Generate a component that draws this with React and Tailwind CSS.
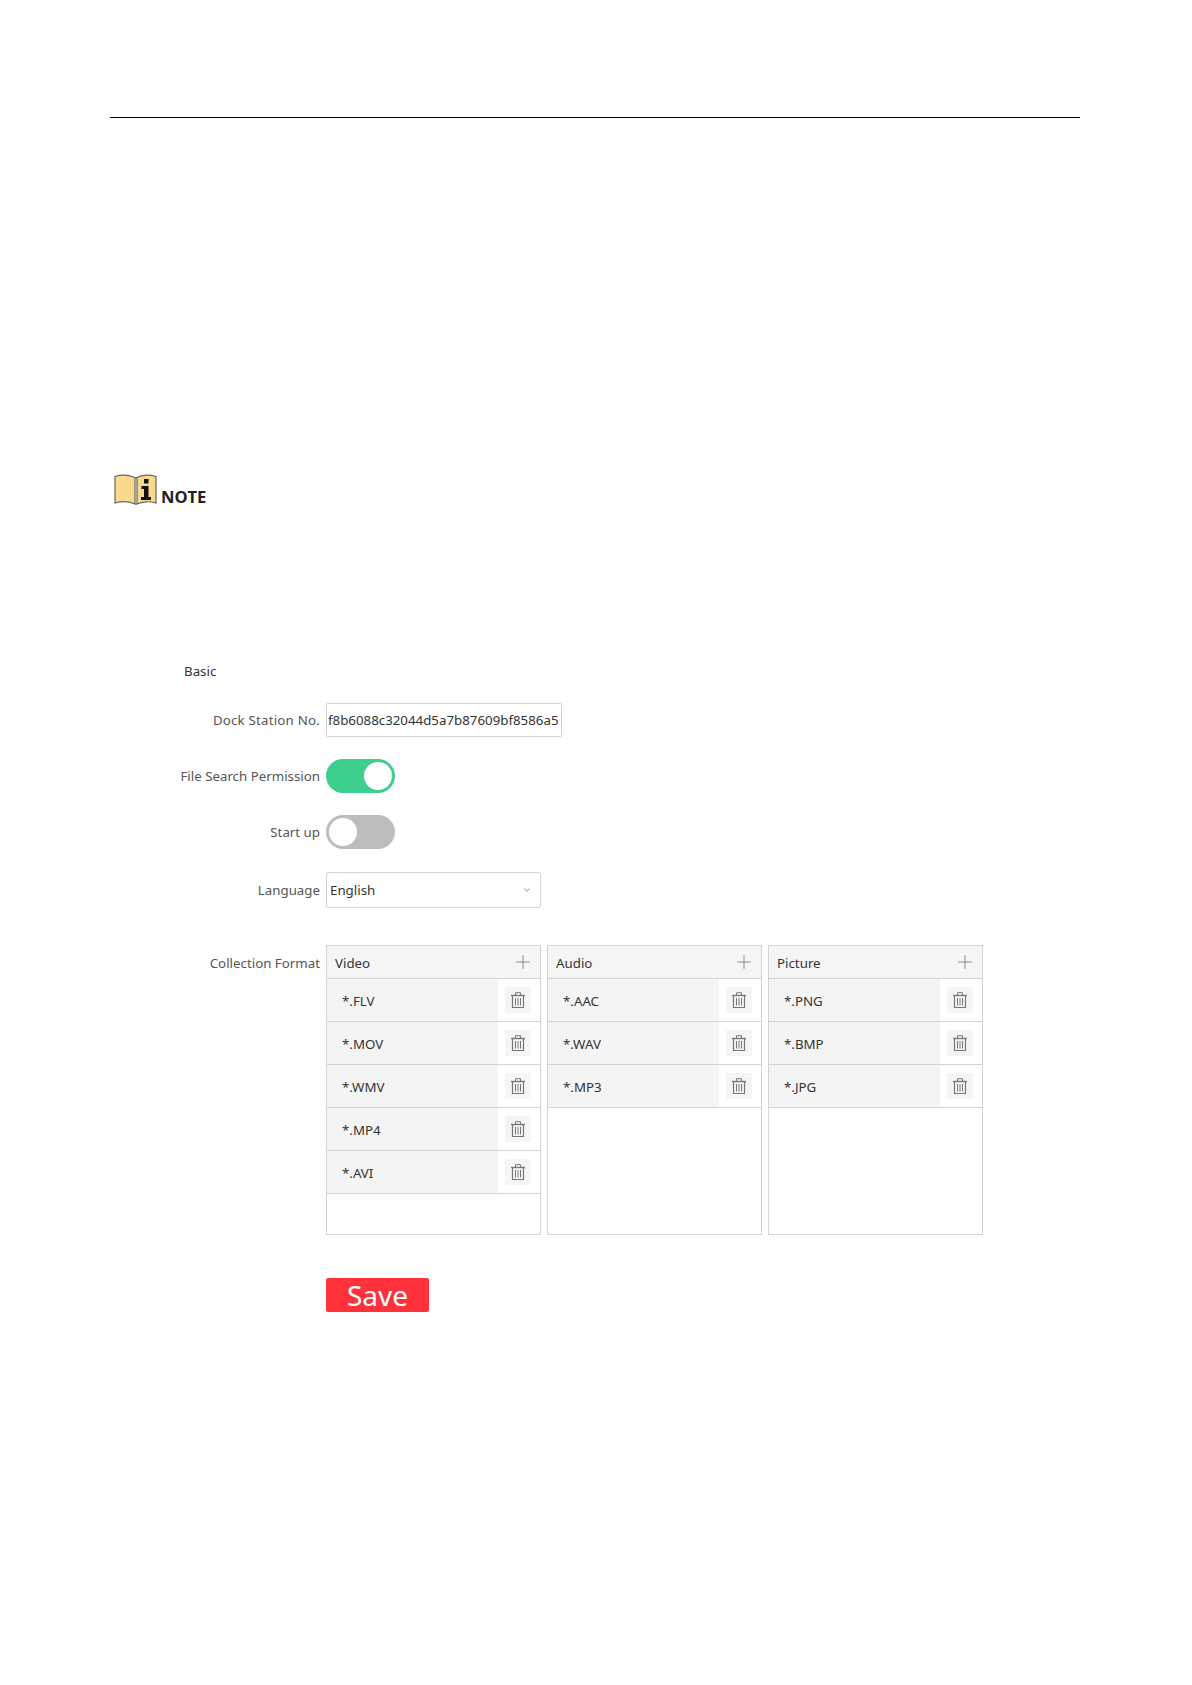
import { Plus, ChevronDown } from "lucide-react";

const columns = [
  { title: "Video", items: ["*.FLV", "*.MOV", "*.WMV", "*.MP4", "*.AVI"] },
  { title: "Audio", items: ["*.AAC", "*.WAV", "*.MP3"] },
  { title: "Picture", items: ["*.PNG", "*.BMP", "*.JPG"] },
];

function NoteIcon() {
  return (
    <svg width="43" height="33" viewBox="0 0 43 33">
      <path d="M1 3.5 C7 1.5 15 2 21 4.5 L21 31 C15 28.5 7 28 1 30 Z" fill="#fbd98c" stroke="#666" strokeWidth="1.2" />
      <path d="M23 4.5 C28 1.5 36 1.5 42 3.5 L42 30 C36 28 28 28.5 23 31 Z" fill="#fbd98c" stroke="#666" strokeWidth="1.2" />
      <path d="M21 4.5 H23 M21 31 H23" stroke="#666" strokeWidth="1.2" />
      <rect x="30" y="6" width="4.5" height="4.5" fill="#111" />
      <path d="M27.5 13 H34.5 V24 H37 V27 H27 V24 H30 V16 H27.5 Z" fill="#111" />
    </svg>
  );
}

function TrashIcon() {
  return (
    <svg width="14" height="17" viewBox="0 0 14 17" fill="none" stroke="#777" strokeWidth="1">
      <path d="M0 3.5 H14" strokeWidth="1.4" />
      <path d="M4.5 3 V0.7 H9.5 V3" />
      <path d="M1.5 4 V15.5 H12.5 V4" strokeWidth="1.2" />
      <path d="M4.5 6 V13.5 M7 6 V13.5 M9.5 6 V13.5" />
    </svg>
  );
}

function Row({ label, children, className }) {
  return (
    <div className={`flex items-center ${className}`}>
      <div className="w-[142px] mr-[6px] pt-[2px] text-right text-[13.3px] text-[#555] whitespace-nowrap">{label}</div>
      {children}
    </div>
  );
}

function FormatColumn({ title, items }) {
  return (
    <div className="w-[215px] h-[290px] border border-[#d4d4d4] flex flex-col">
      <div className="h-[33px] shrink-0 bg-[#f5f5f5] border-b border-[#d4d4d4] flex items-center justify-between pl-2 pr-[6px] text-[13.3px] text-[#333]">
        <span className="pt-[3px]">{title}</span>
        <Plus className="w-[22px] h-[22px] text-[#777]" strokeWidth={0.9} />
      </div>
      {items.map((item) => (
        <div key={item} className="h-[43px] shrink-0 border-b border-[#d4d4d4] flex items-center">
          <div className="w-[171px] h-full bg-[#f4f4f4] pl-[15px] pt-[3px] flex items-center text-[13.3px] text-[#333]">{item}</div>
          <div className="ml-[7px] w-[26px] h-[26px] bg-[#f5f5f5] flex items-center justify-center">
            <TrashIcon />
          </div>
        </div>
      ))}
    </div>
  );
}

export default function App() {
  return (
    <div className="w-[1192px] h-[1685px] bg-white pt-[117px] font-['Noto_Sans','Open_Sans',sans-serif]">
      <div className="ml-[110px] w-[970px] h-px bg-black" />

      <div className="ml-[114px] mt-[355px] flex items-end h-[33px]">
        <NoteIcon />
        <span className="ml-[4px] text-[16.5px] font-bold leading-[18px] text-[#222] font-['Open_Sans',sans-serif]">NOTE</span>
      </div>

      <div className="ml-[184px] mt-[156px] text-[13.3px] leading-[18px] text-[#333]">Basic</div>

      <div className="ml-[178px] mt-[23px]">
        <Row label="Dock Station No." className="h-[34px] tracking-[0.2px]">
          <div className="w-[236px] h-[34px] border border-[#d4d4d4] rounded-[2px] flex items-center px-[1px] pt-[2px] text-[13.3px] tracking-normal text-[#333] whitespace-nowrap">
            f8b6088c32044d5a7b87609bf8586a5
          </div>
        </Row>

        <Row label="File Search Permission" className="h-[34px] mt-[22px]">
          <div className="w-[69px] h-[34px] rounded-full bg-[#3ecf8e] flex items-center justify-end pr-[3px]">
            <div className="w-[28px] h-[28px] rounded-full bg-white" />
          </div>
        </Row>

        <Row label="Start up" className="h-[34px] mt-[22px]">
          <div className="w-[69px] h-[34px] rounded-full bg-[#bdbdbd] flex items-center pl-[3px]">
            <div className="w-[28px] h-[28px] rounded-full bg-white" />
          </div>
        </Row>

        <Row label="Language" className="h-[36px] mt-[23px]">
          <div className="w-[215px] h-[36px] border border-[#d4d4d4] rounded-[2px] flex items-center justify-between pl-[3px] pr-[8px] text-[13.3px] text-[#333]">
            <span className="pt-[2px]">English</span>
            <ChevronDown className="w-[10px] h-[10px] text-[#777]" />
          </div>
        </Row>

        <div className="flex items-start mt-[37px]">
          <div className="w-[142px] mr-[6px] mt-[9px] text-right text-[13.3px] text-[#555]">Collection Format</div>
          <div className="flex gap-[6px]">
            {columns.map((col) => (
              <FormatColumn key={col.title} title={col.title} items={col.items} />
            ))}
          </div>
        </div>

        <button className="block ml-[148px] mt-[43px] w-[103px] h-[34px] rounded-[2px] bg-[#ff323c] text-white text-[28px] leading-[34px]">
          Save
        </button>
      </div>
    </div>
  );
}
